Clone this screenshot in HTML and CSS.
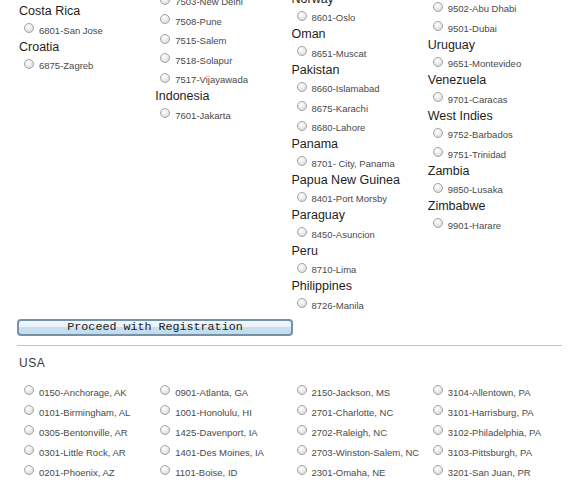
FILE: index.html
```html
<!DOCTYPE html>
<html lang="en">
<head>
	<meta charset="UTF-8">
	<title>Select Location</title>
	<link rel="stylesheet" href="styles.css">
</head>
<body>
<div class="wrap">
	<!-- country / city list (page is scrolled down, top part is above the fold) -->
	<div class="countries">
		<div class="col">
			<div class="country">Argentina</div>
			<label class="city"><input type="radio" name="city">6001-Buenos Aires</label>
			<div class="country">Australia</div>
			<label class="city"><input type="radio" name="city">6101-Sydney</label>
			<div class="country">Brazil</div>
			<label class="city"><input type="radio" name="city">6301-Sao Paulo</label>
			<div class="country">Canada</div>
			<label class="city"><input type="radio" name="city">6401-Toronto</label>
			<div class="country">Chile</div>
			<label class="city"><input type="radio" name="city">6601-Santiago</label>
			<div class="country">Costa Rica</div>
			<label class="city"><input type="radio" name="city">6801-San Jose</label>
			<div class="country">Croatia</div>
			<label class="city"><input type="radio" name="city">6875-Zagreb</label>
		</div>
		<div class="col">
			<div class="country">Egypt</div>
			<label class="city"><input type="radio" name="city">7101-Cairo</label>
			<div class="country">Germany</div>
			<label class="city"><input type="radio" name="city">7201-Frankfurt</label>
			<label class="city"><input type="radio" name="city">7202-Berlin</label>
			<div class="country">India</div>
			<label class="city"><input type="radio" name="city">7501-Mumbai</label>
			<label class="city"><input type="radio" name="city">7502-Chennai</label>
			<label class="city"><input type="radio" name="city">7505-Bangalore</label>
			<label class="city"><input type="radio" name="city">7503-New Delhi</label>
			<label class="city"><input type="radio" name="city">7508-Pune</label>
			<label class="city"><input type="radio" name="city">7515-Salem</label>
			<label class="city"><input type="radio" name="city">7518-Solapur</label>
			<label class="city"><input type="radio" name="city">7517-Vijayawada</label>
			<div class="country">Indonesia</div>
			<label class="city"><input type="radio" name="city">7601-Jakarta</label>
		</div>
		<div class="col">
			<div class="country">Japan</div>
			<label class="city"><input type="radio" name="city">8001-Tokyo</label>
			<label class="city"><input type="radio" name="city">8002-Osaka</label>
			<div class="country">Kenya</div>
			<label class="city"><input type="radio" name="city">8101-Nairobi</label>
			<div class="country">Nigeria</div>
			<label class="city"><input type="radio" name="city">8501-Lagos</label>
			<label class="city"><input type="radio" name="city">8502-Abuja</label>
			<label class="city"><input type="radio" name="city">8503-Port Harcourt</label>
			<div class="country">Norway</div>
			<label class="city"><input type="radio" name="city">8601-Oslo</label>
			<div class="country">Oman</div>
			<label class="city"><input type="radio" name="city">8651-Muscat</label>
			<div class="country">Pakistan</div>
			<label class="city"><input type="radio" name="city">8660-Islamabad</label>
			<label class="city"><input type="radio" name="city">8675-Karachi</label>
			<label class="city"><input type="radio" name="city">8680-Lahore</label>
			<div class="country">Panama</div>
			<label class="city"><input type="radio" name="city">8701- City, Panama</label>
			<div class="country">Papua New Guinea</div>
			<label class="city"><input type="radio" name="city">8401-Port Morsby</label>
			<div class="country">Paraguay</div>
			<label class="city"><input type="radio" name="city">8450-Asuncion</label>
			<div class="country">Peru</div>
			<label class="city"><input type="radio" name="city">8710-Lima</label>
			<div class="country">Philippines</div>
			<label class="city"><input type="radio" name="city">8726-Manila</label>
		</div>
		<div class="col">
			<div class="country">UAE</div>
			<label class="city"><input type="radio" name="city">9510-Sharjah</label>
			<label class="city"><input type="radio" name="city">9511-Ajman</label>
			<label class="city"><input type="radio" name="city">9512-Al Ain</label>
			<label class="city"><input type="radio" name="city">9513-Fujairah</label>
			<label class="city"><input type="radio" name="city">9514-Ras Al Khaimah</label>
			<label class="city"><input type="radio" name="city">9515-Umm Al Quwain</label>
			<label class="city"><input type="radio" name="city">9516-Khor Fakkan</label>
			<label class="city"><input type="radio" name="city">9517-Jebel Ali</label>
			<label class="city"><input type="radio" name="city">9502-Abu Dhabi</label>
			<label class="city"><input type="radio" name="city">9501-Dubai</label>
			<div class="country">Uruguay</div>
			<label class="city"><input type="radio" name="city">9651-Montevideo</label>
			<div class="country">Venezuela</div>
			<label class="city"><input type="radio" name="city">9701-Caracas</label>
			<div class="country">West Indies</div>
			<label class="city"><input type="radio" name="city">9752-Barbados</label>
			<label class="city"><input type="radio" name="city">9751-Trinidad</label>
			<div class="country">Zambia</div>
			<label class="city"><input type="radio" name="city">9850-Lusaka</label>
			<div class="country">Zimbabwe</div>
			<label class="city"><input type="radio" name="city">9901-Harare</label>
		</div>
	</div>

	<button type="button" class="btn-proceed">Proceed with Registration</button>

	<div class="divider"></div>

	<!-- USA -->
	<h2 class="usa-title">USA</h2>
	<div class="usa-grid">
		<div class="col">
			<label class="city usa"><input type="radio" name="city">0150-Anchorage, AK</label>
			<label class="city usa"><input type="radio" name="city">0101-Birmingham, AL</label>
			<label class="city usa"><input type="radio" name="city">0305-Bentonville, AR</label>
			<label class="city usa"><input type="radio" name="city">0301-Little Rock, AR</label>
			<label class="city usa"><input type="radio" name="city">0201-Phoenix, AZ</label>
		</div>
		<div class="col">
			<label class="city usa"><input type="radio" name="city">0901-Atlanta, GA</label>
			<label class="city usa"><input type="radio" name="city">1001-Honolulu, HI</label>
			<label class="city usa"><input type="radio" name="city">1425-Davenport, IA</label>
			<label class="city usa"><input type="radio" name="city">1401-Des Moines, IA</label>
			<label class="city usa"><input type="radio" name="city">1101-Boise, ID</label>
		</div>
		<div class="col">
			<label class="city usa"><input type="radio" name="city">2150-Jackson, MS</label>
			<label class="city usa"><input type="radio" name="city">2701-Charlotte, NC</label>
			<label class="city usa"><input type="radio" name="city">2702-Raleigh, NC</label>
			<label class="city usa"><input type="radio" name="city">2703-Winston-Salem, NC</label>
			<label class="city usa"><input type="radio" name="city">2301-Omaha, NE</label>
		</div>
		<div class="col">
			<label class="city usa"><input type="radio" name="city">3104-Allentown, PA</label>
			<label class="city usa"><input type="radio" name="city">3101-Harrisburg, PA</label>
			<label class="city usa"><input type="radio" name="city">3102-Philadelphia, PA</label>
			<label class="city usa"><input type="radio" name="city">3103-Pittsburgh, PA</label>
			<label class="city usa"><input type="radio" name="city">3201-San Juan, PR</label>
		</div>
	</div>
</div>
</body>
</html>
```

FILE: styles.css
```css
html,body{
	margin: 0;
	padding: 0;
}
body{
	background-color: #fff;
	font-family: "Liberation Sans", Arial, sans-serif;
	color: #333;
}

.wrap{
	width: 545px;
	margin-left: 17px;
}

.countries{
	display: grid;
	grid-template-columns: repeat(4, 1fr);
	align-items: start;
	margin-top: -174.5px;
}
.col{
	display: flex;
	flex-direction: column;
}
.country{
	height: 16px;
	line-height: 16px;
	padding-left: 2px;
	font-size: 12.5px;
	color: #1e1e1e;
	white-space: nowrap;
}

/* city row */
.city{
	display: flex;
	align-items: center;
	box-sizing: border-box;
	height: 19.5px;
	padding: 3px 0 0 7px;
	font-size: 9.5px;
	color: #4a4a4a;
	white-space: nowrap;
}
.city.usa{
	height: 20px;
}
.city input{
	appearance: none;
	-webkit-appearance: none;
	flex: none;
	box-sizing: border-box;
	width: 10px;
	height: 10px;
	margin: 0 5px 4px 0;
	border: 1px solid #a3a3a3;
	border-radius: 50%;
	background: radial-gradient(circle at 40% 30%, #fff 0, #ececec 45%, #d2d2d2 100%);
}

/* button */
.btn-proceed{
	display: block;
	box-sizing: border-box;
	width: 276px;
	height: 17px;
	margin: 5px 0 0;
	padding: 0;
	border: 2px solid #7391a9;
	border-radius: 4px;
	background: linear-gradient(#f3f8fc 0, #e6f0f7 50%, #c9e0ee 50%, #c2dbeb 100%);
	font-family: "Liberation Mono", "Courier New", monospace;
	font-size: 11.7px;
	line-height: 13px;
	color: #222;
}

.divider{
	margin-top: 9.5px;
	border-top: 1px solid #c4c4c4;
}

.usa-title{
	margin: 9px 0 0;
	padding-left: 2px;
	height: 16px;
	line-height: 16px;
	font-size: 12px;
	font-weight: normal;
	letter-spacing: 0.6px;
	color: #3a3a3a;
}

.usa-grid{
	display: grid;
	grid-template-columns: repeat(4, 1fr);
	margin-top: 9.5px;
}
```
